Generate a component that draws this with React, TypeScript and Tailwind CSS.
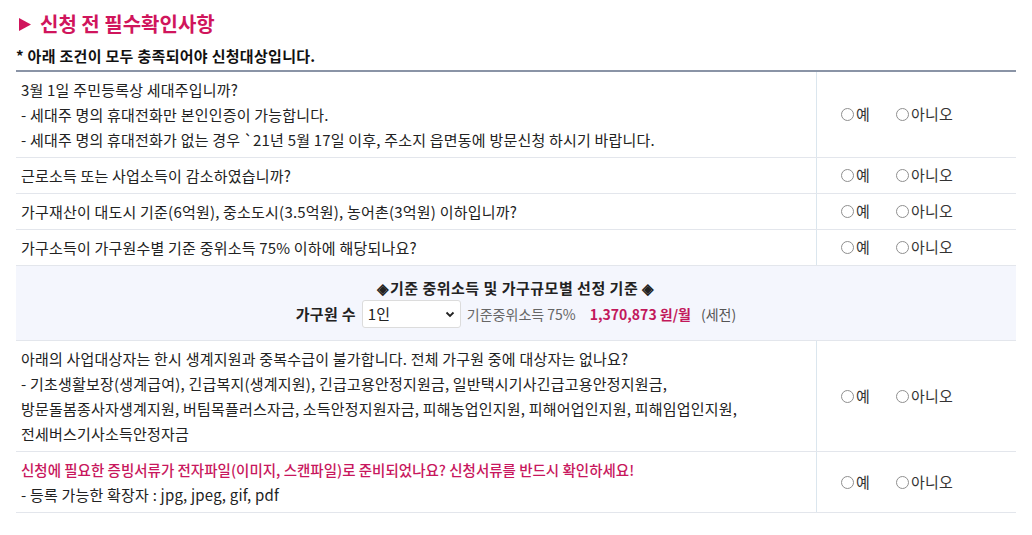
import {ReactNode} from "react";

const font = {fontFamily: '"Noto Sans CJK KR", "Noto Sans", sans-serif'};

const Radio = ({label}: {label: string}) => (
 <label className="flex items-center gap-[2px] text-[15px] text-[#333] tracking-[0.2px]">
  <span className="w-[13px] h-[13px] rounded-full border border-[#8f8f8f] bg-white" />
  <span>{label}</span>
 </label>
);

const Row = ({children}: {children: ReactNode}) => (
 <div className="flex border-b border-[#e3e6ec]">
  <div className="flex-1 px-[5px] py-[5px] leading-[25px] text-[15px] tracking-[0.2px] text-[#222] border-r border-[#dbe6ee]">
   {children}
  </div>
  <div className="w-[199px] flex items-center pl-[24px] gap-[26px]">
   <Radio label="예" />
   <Radio label="아니오" />
  </div>
 </div>
);

export default function App() {
 return (
  <div className="w-[1032px] h-[535px] bg-white px-4 pt-[10px]" style={font}>
   <h2 className="flex items-center gap-[8px] text-[20px] font-bold text-[#d0155c] leading-[28px] pl-[2px]">
    <svg width="14" height="15" viewBox="0 0 14 15">
     <path d="M1 1 L13 7.5 L1 14 Z" fill="#d0155c" />
    </svg>
    신청 전 필수확인사항
   </h2>
   <p className="mt-[8px] text-[15px] font-bold text-[#111] leading-[20px] tracking-[0.3px]">
    * 아래 조건이 모두 충족되어야 신청대상입니다.
   </p>
   <div className="mt-[4px] w-[1000px] border-t-2 border-[#8a94a6]">
    <Row>
     <p>3월 1일 주민등록상 세대주입니까?</p>
     <p>- 세대주 명의 휴대전화만 본인인증이 가능합니다.</p>
     <p>- 세대주 명의 휴대전화가 없는 경우 `21년 5월 17일 이후, 주소지 읍면동에 방문신청 하시기 바랍니다.</p>
    </Row>
    <Row>
     <p>근로소득 또는 사업소득이 감소하였습니까?</p>
    </Row>
    <Row>
     <p>가구재산이 대도시 기준(6억원), 중소도시(3.5억원), 농어촌(3억원) 이하입니까?</p>
    </Row>
    <Row>
     <p>가구소득이 가구원수별 기준 중위소득 75% 이하에 해당되나요?</p>
    </Row>
    <div className="bg-[#f4f6fd] border-b border-[#e3e6ec] h-[75px] flex flex-col items-center pt-[11px]">
     <p className="text-[15px] font-bold text-[#222] leading-[22px] tracking-[0.5px]">◈기준 중위소득 및 가구규모별 선정 기준 ◈</p>
     <div className="flex items-center mt-[1px] text-[14px]">
      <span className="font-bold text-[15px] text-[#222] mr-[6px] tracking-[0.3px]">가구원 수</span>
      <div className="w-[99px] h-[28px] bg-white border border-[#dcdcdc] rounded-[3px] flex items-center justify-between px-[5px] text-[15px] text-[#222]">
       <span>1인</span>
       <svg width="10" height="7" viewBox="0 0 10 7">
        <path d="M1.5 1.5 L5 5 L8.5 1.5" stroke="#222" strokeWidth="1.8" fill="none" />
       </svg>
      </div>
      <span className="ml-[6px] text-[#666]">기준중위소득 75%</span>
      <span className="ml-[14px] font-bold text-[14px] text-[#c2185b]">1,370,873 원/월</span>
      <span className="ml-[10px] text-[#555]">(세전)</span>
     </div>
    </div>
    <Row>
     <p>아래의 사업대상자는 한시 생계지원과 중복수급이 불가합니다. 전체 가구원 중에 대상자는 없나요?</p>
     <p>- 기초생활보장(생계급여), 긴급복지(생계지원), 긴급고용안정지원금, 일반택시기사긴급고용안정지원금,</p>
     <p>방문돌봄종사자생계지원, 버팀목플러스자금, 소득안정지원자금, 피해농업인지원, 피해어업인지원, 피해임업인지원,</p>
     <p>전세버스기사소득안정자금</p>
    </Row>
    <Row>
     <p className="text-[#c8175d] text-[14.5px] font-medium tracking-normal">신청에 필요한 증빙서류가 전자파일(이미지, 스캔파일)로 준비되었나요? 신청서류를 반드시 확인하세요!</p>
     <p>- 등록 가능한 확장자 : jpg, jpeg, gif, pdf</p>
    </Row>
   </div>
  </div>
 );
}
